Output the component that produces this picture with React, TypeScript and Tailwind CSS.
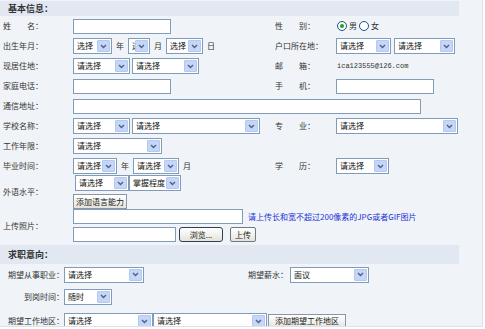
import React from 'react';

const font = { fontFamily: '"Noto Sans CJK SC", "Liberation Sans", sans-serif' };

function Sel({ w, text, className = '' }: { w: number; text: string; className?: string }) {
  return (
    <div
      className={`flex items-center h-[16px] border border-[#7f9db9] bg-white shrink-0 ${className}`}
      style={{ width: w }}
    >
      <span className="flex-1 overflow-hidden whitespace-nowrap pl-[3px] text-[8px] leading-[12px] text-[#111]">{text}</span>
      <span className="flex items-center justify-center w-[13px] h-[12px] mr-[1px] rounded-[1px] bg-[#c6d6f7] border border-[#b3c8f2] shrink-0">
        <svg width="7" height="5" viewBox="0 0 7 5">
          <path d="M1 1l2.5 2.5L6 1" fill="none" stroke="#4d6185" strokeWidth="1.4" />
        </svg>
      </span>
    </div>
  );
}

function Inp({ w, className = '' }: { w: number; className?: string }) {
  return <div className={`h-[15px] border border-[#7f9db9] bg-white shrink-0 ${className}`} style={{ width: w }} />;
}

function Btn({ children, className = '' }: { children: React.ReactNode; className?: string }) {
  return (
    <div
      className={`flex items-center justify-center h-[15px] px-[2px] border border-[#6c7a88] rounded-[2px] bg-gradient-to-b from-white to-[#e4e4dc] text-[8px] leading-[12px] whitespace-nowrap text-[#222] shrink-0 ${className}`}
    >
      {children}
    </div>
  );
}

function Label({ children, w = 70 }: { children: React.ReactNode; w?: number }) {
  return (
    <div className="shrink-0 whitespace-nowrap text-[8px] leading-[12px] text-[#333]" style={{ width: w }}>
      {children}
    </div>
  );
}

function Unit({ children }: { children: React.ReactNode }) {
  return <span className="whitespace-nowrap text-[8px] leading-[12px] text-[#333] px-[4px]">{children}</span>;
}

function Row({ left, right, h = 20 }: { left: React.ReactNode; right?: React.ReactNode; h?: number }) {
  return (
    <div className="flex items-center pl-[3px]" style={{ height: h }}>
      <div className="flex items-center w-[272px] shrink-0">{left}</div>
      {right && <div className="flex items-center">{right}</div>}
    </div>
  );
}

function Radio({ checked }: { checked?: boolean }) {
  return (
    <span className="flex items-center justify-center w-[10px] h-[10px] rounded-full border border-[#1d5281] bg-white">
      {checked && <span className="w-[4px] h-[4px] rounded-full bg-[#21a121]" />}
    </span>
  );
}

function SubLabel({ children }: { children: React.ReactNode }) {
  return (
    <div className="w-[58px] shrink-0 text-right whitespace-nowrap text-[8px] leading-[12px] text-[#333]">{children}</div>
  );
}

export default function App() {
  return (
    <div className="w-[485px] h-[329px] bg-white" style={font}>
      <div className="w-[483px] h-[327px] bg-[#f0f3f8] border-r border-b border-[#dde1e8] overflow-hidden pt-[1px]">
        <div className="w-[459px] h-[15px] flex items-center pl-[8px] bg-[#e2e8f2] text-[9px] font-bold leading-[12px] text-[#333]">
          基本信息：
        </div>

        <Row
          left={<><Label>姓　　名：</Label><Inp w={98} /></>}
          right={
            <>
              <Label w={62}>性　　别：</Label>
              <div className="flex items-center gap-[2px] text-[8px] leading-[12px] text-[#333]">
                <Radio checked />
                <span>男</span>
                <Radio />
                <span>女</span>
              </div>
            </>
          }
        />
        <Row
          left={
            <>
              <Label>出生年月：</Label>
              <Sel w={39} text="选择" />
              <Unit>年</Unit>
              <Sel w={22} text="选择" />
              <Unit>月</Unit>
              <Sel w={37} text="选择" />
              <Unit>日</Unit>
            </>
          }
          right={
            <>
              <Label w={61}>户口所在地：</Label>
              <Sel w={55} text="请选择" />
              <Sel w={61} text="请选择" className="ml-[3px]" />
            </>
          }
        />
        <Row
          left={
            <>
              <Label>现居住地：</Label>
              <Sel w={57} text="请选择" />
              <Sel w={67} text="请选择" className="ml-[2px]" />
            </>
          }
          right={
            <>
              <Label w={62}>邮　　箱：</Label>
              <span className="whitespace-nowrap text-[7px] leading-[12px] text-[#333]" style={{ fontFamily: '"Liberation Mono", monospace' }}>
                ica123555@126.com
              </span>
            </>
          }
        />
        <Row
          left={<><Label>家庭电话：</Label><Inp w={98} /></>}
          right={<><Label w={61}>手　　机：</Label><Inp w={98} /></>}
        />
        <Row left={<><Label>通信地址：</Label><Inp w={348} /></>} />
        <Row
          left={
            <>
              <Label>学校名称：</Label>
              <Sel w={57} text="请选择" />
              <Sel w={128} text="请选择" className="ml-[2px]" />
            </>
          }
          right={<><Label w={61}>专　　业：</Label><Sel w={122} text="请选择" /></>}
        />
        <Row left={<><Label>工作年限：</Label><Sel w={89} text="请选择" /></>} />
        <Row
          left={
            <>
              <Label>毕业时间：</Label>
              <Sel w={44} text="请选择" />
              <Unit>年</Unit>
              <Sel w={46} text="请选择" />
              <Unit>月</Unit>
            </>
          }
          right={<><Label w={61}>学　　历：</Label><Sel w={53} text="请选择" /></>}
        />
        <Row
          h={32}
          left={
            <>
              <Label>外语水平：</Label>
              <div className="flex flex-col gap-[3px]">
                <div className="flex">
                  <Sel w={54} text="请选择" className="ml-[2px]" />
                  <Sel w={52} text="掌握程度" />
                </div>
                <Btn className="w-[54px] rounded-none border-[#8a96a3]">添加语言能力</Btn>
              </div>
            </>
          }
        />
        <div className="flex items-center pl-[3px] h-[35px]">
          <Label>上传照片：</Label>
          <div className="flex flex-col gap-[3px]">
            <div className="flex items-center">
              <Inp w={170} />
              <span className="ml-[5px] whitespace-nowrap text-[8px] leading-[12px] text-[#2433d6]">请上传长和宽不超过200像素的JPG或者GIF图片</span>
            </div>
            <div className="flex items-center">
              <Inp w={103} />
              <Btn className="ml-[3px] w-[44px] rounded-[3px] border-[#304050]">浏览...</Btn>
              <Btn className="ml-[7px] w-[26px]">上传</Btn>
            </div>
          </div>
        </div>

        <div className="mt-[2px] w-[459px] h-[19px] flex items-center pl-[8px] bg-[#e2e8f2] text-[9px] font-bold leading-[12px] text-[#333]">
          求职意向：
        </div>

        <div className="flex items-center pl-[6px] h-[19px] mt-[1px]">
          <div className="flex items-center w-[242px] shrink-0">
            <SubLabel>期望从事职业：</SubLabel>
            <Sel w={80} text="请选择" />
          </div>
          <div className="w-[42px] shrink-0 whitespace-nowrap text-[8px] leading-[12px] text-[#333]">期望薪水：</div>
          <Sel w={79} text="面议" />
        </div>
        <div className="flex items-center pl-[6px] h-[25px]">
          <SubLabel>到岗时间：</SubLabel>
          <Sel w={48} text="随时" />
        </div>
        <div className="flex items-center pl-[6px] h-[24px]">
          <SubLabel>期望工作地区：</SubLabel>
          <Sel w={89} text="请选择" />
          <Sel w={114} text="请选择" />
          <Btn className="ml-[1px] w-[78px] rounded-none border-[#8a96a3]">添加期望工作地区</Btn>
        </div>
      </div>
    </div>
  );
}
